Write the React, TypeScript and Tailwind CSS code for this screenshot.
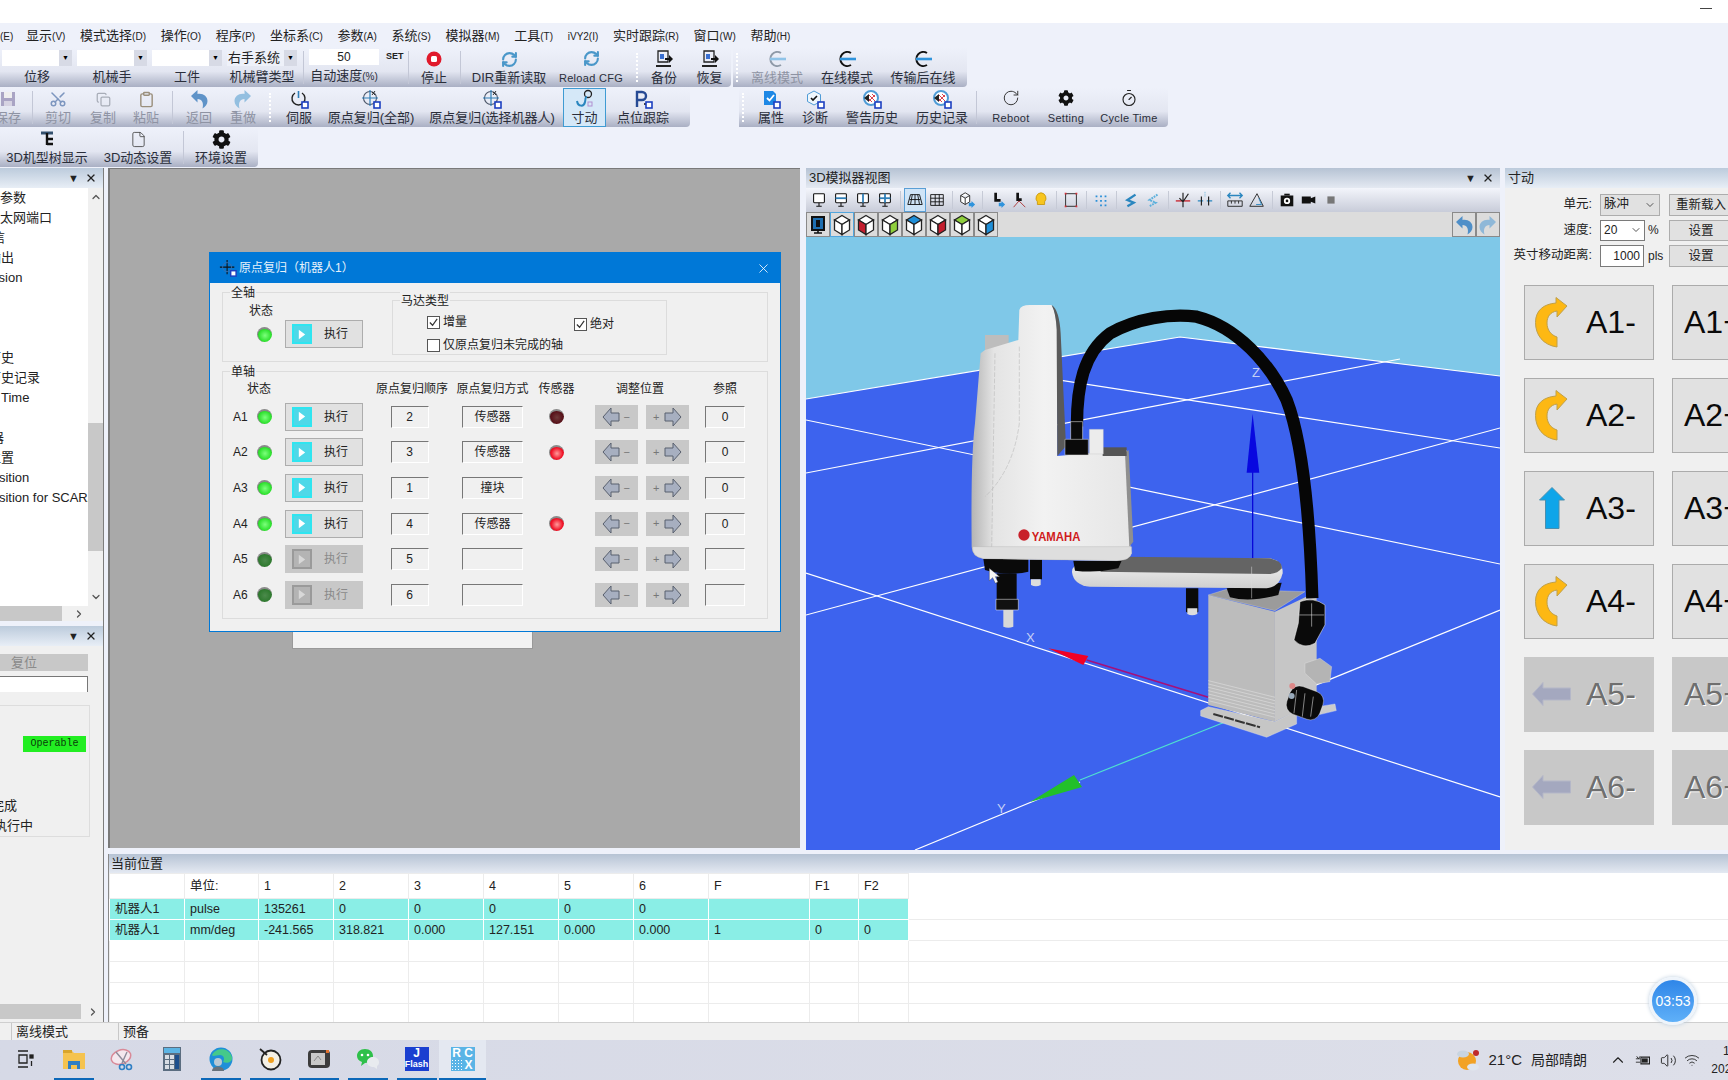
import React from "react";
import clsx from "clsx";
import {
  ChevronDown,
  ChevronRight,
  ChevronUp,
  Clipboard,
  Copy,
  File,
  RefreshCw,
  RotateCw,
  Scissors,
  Timer,
  Volume2,
  Wifi,
  X,
} from "lucide-react";
import { FaCog } from "react-icons/fa";

const MENU: [string, string][] = [
  ["", "(E)"],
  ["显示", "(V)"],
  ["模式选择", "(D)"],
  ["操作", "(O)"],
  ["程序", "(P)"],
  ["坐标系", "(C)"],
  ["参数", "(A)"],
  ["系统", "(S)"],
  ["模拟器", "(M)"],
  ["工具", "(T)"],
  ["", "iVY2(I)"],
  ["实时跟踪", "(R)"],
  ["窗口", "(W)"],
  ["帮助", "(H)"],
];

const Badge = () => <rect x="13" y="13" width="6" height="6" fill="#fff" stroke="#1c3fc0" strokeWidth="1.6" />;

const Svg: React.FC<{ children: React.ReactNode; size?: number; className?: string }> = ({ children, size = 20, className }) => (
  <svg viewBox="0 0 20 20" width={size} height={size} fill="none" className={className}>
    {children}
  </svg>
);

const PlugIcon = ({ dim }: { dim?: boolean }) => (
  <Svg>
    <path d="M14 4A7 7 0 1 0 14 16" stroke={dim ? "#8f9aa8" : "#111"} strokeWidth="2" />
    <path d="M3 10h16" stroke={dim ? "#8fc3e8" : "#2f93dc"} strokeWidth="2.6" />
  </Svg>
);

const HomeIcon = () => (
  <Svg>
    <circle cx="9" cy="9" r="6.500" stroke="#4b5568" strokeWidth="1.100" />
    <path d="M9 1v16M1 9h16" stroke="#2f7fb8" strokeWidth="1.200" />
    <path d="M11 3l3 3M14 2l-3 4" stroke="#333" />
    <Badge />
  </Svg>
);

const HistoryIcon = () => (
  <Svg>
    <circle cx="9" cy="9" r="7" fill="#fff" stroke="#4f9bd6" strokeWidth="2" />
    <path d="M7 6l6 6M13 6l-6 6M10 5l3 3M6 9l4 4" stroke="#d8454f" />
    <path d="M2 9l5-4v8z" fill="#222" />
    <Badge />
  </Svg>
);

const CurveArrow = () => (
  <svg viewBox="0 0 33 51" width="33" height="51">
    <path
      d="M22 50C8 48 .5 38 .5 25.500C.5 13 9 7 21 6V.5L32 9L22 20V14C15 15 12 20 12 26C12 33 16 38 22 40Z"
      fill="#fdb813"
      stroke="#c0a04a"
    />
  </svg>
);

const UpArrow = () => (
  <svg viewBox="0 0 26 42" width="26" height="42" className="ml-[4px]">
    <path d="M13 .5L25.500 13H20V41.500H6.500V13H.5Z" fill="#0ea5e9" stroke="#4a8fae" />
  </svg>
);

const LeftArrow = () => (
  <svg viewBox="0 0 39 24" width="39" height="24" className="ml-[-3px]">
    <path d="M11 .5V6H38.500V18H11V23.500L.5 12Z" fill="#a4a8bf" stroke="#b4b7c8" />
  </svg>
);

const AdjustArrow = ({ flip }: { flip?: boolean }) => (
  <svg viewBox="0 0 18 20" width="18" height="20" className={flip ? "rotate-180" : ""}>
    <path d="M9 1L1 10l8 9v-5h8V6H9Z" fill="#a7afc0" stroke="#59606e" />
  </svg>
);

// head on the left, tail curling down on the right; flip gives redo
const UndoGlyph = ({ flip, color }: { flip?: boolean; color: string }) => (
  <svg viewBox="0 0 20 20" width="20" height="20" className={flip ? "-scale-x-100" : ""}>
    <path d="M2 7L8.500 1V5C14 4 18.500 7.500 18.500 12C18.500 15 16.500 17.500 13.500 19.500C15 14 13 10 8.500 10V13.500Z" fill={color} />
  </svg>
);

// flat toolbar cell: icon on top, caption below
const Tool: React.FC<{ w: string; label: string; dim?: boolean; active?: boolean; sm?: boolean; children?: React.ReactNode }> = ({
  w,
  label,
  dim,
  active,
  sm,
  children,
}) => (
  <div
    className={clsx(
      "flex h-full shrink-0 flex-col items-center justify-center whitespace-nowrap",
      w,
      active && "border border-[#3f9bd3] bg-[#d5e8f8]"
    )}
  >
    <div className="flex h-[20px] items-center justify-center">{children}</div>
    <span className={clsx("leading-[17px]", sm ? "pt-[2px] text-[11px] tracking-[.3px]" : "text-[13px]", dim ? "text-[#8e93a3]" : "text-[#2a2e3a]")}>{label}</span>
  </div>
);

const Sep = ({ w = "w-[4px]" }: { w?: string }) => (
  <div className={clsx("flex shrink-0 justify-center py-[3px]", w)}>
    <div className="w-px bg-[#c3c7d6]" />
  </div>
);

const Grip = ({ w = "w-[6px]" }: { w?: string }) => (
  <div className={clsx("flex shrink-0 justify-center py-[5px]", w)}>
    <div className="border-l-2 border-dotted border-[#fff]" />
  </div>
);

const Combo: React.FC<{ w: string; label: string; text?: string }> = ({ w, label, text }) => (
  <div className={clsx("flex h-full shrink-0 flex-col items-center justify-end pb-[1px]", w)}>
    <div className="mb-[2px] flex h-[16px] w-[70px]">
      <div className={clsx("flex-1 pl-[1px] text-[13px] leading-[16px]", text ? "bg-[#eef1f9]" : "bg-white")}>{text}</div>
      <div className="flex w-[13px] items-center justify-center bg-[#d7dae5] text-[7px] text-black">▼</div>
    </div>
    <span className="text-[13px] leading-[18px] text-[#2a2e3a]">{label}</span>
  </div>
);

const Segment: React.FC<{ className: string; children: React.ReactNode }> = ({ className, children }) => (
  <div className={clsx("flex h-[39px] rounded-br-[4px] bg-gradient-to-b from-[#eef1fa] via-[#e3e6f1] via-60% to-[#aab0c4]", className)}>{children}</div>
);

const Toolbars = () => (
  <div className="flex h-[120px] flex-col gap-px">
    <div className="flex">
      <Segment className="w-[731px]">
        <Combo w="w-[74px]" label="位移" />
        <Combo w="w-[76px]" label="机械手" />
        <Combo w="w-[74px]" label="工件" />
        <Combo w="w-[76px]" label="机械臂类型" text="右手系统" />
        <Sep w="w-[6px]" />
        <div className="flex h-full w-[100px] shrink-0 flex-col justify-end pb-[1px]">
          <div className="mb-[2px] flex h-[16px] items-center">
            <div className="ml-[3px] h-full w-[70px] bg-white text-center text-[12px] leading-[16px]">50</div>
            <span className="ml-[7px] text-[9px] font-bold">SET</span>
          </div>
          <span className="w-[76px] text-center text-[13px] leading-[18px] text-[#2a2e3a]">
            自动速度<span className="text-[10px]">(%)</span>
          </span>
        </div>
        <Sep />
        <Tool w="w-[48px]" label="停止">
          <Svg>
            <circle cx="10" cy="10" r="7.500" fill="#e0192b" />
            <rect x="7" y="7" width="6" height="6" rx="1.500" fill="#fff" />
          </Svg>
        </Tool>
        <Sep />
        <Tool w="w-[94px]" label="DIR重新读取">
          <RefreshCw size={17} color="#4a97c9" strokeWidth={3} />
        </Tool>
        <Tool w="w-[70px]" label="Reload CFG" sm>
          <RefreshCw size={17} color="#4a97c9" strokeWidth={3} />
        </Tool>
        <div className="w-[8px] shrink-0" />
        <Grip />
        <Tool w="w-[48px]" label="备份">
          <Svg>
            <path d="M4 2h10v11H4z" stroke="#222" strokeWidth="1.300" />
            <path d="M2 17h15" stroke="#222" strokeWidth="2" />
            <path d="M6 5h4v5H6z" fill="#3a6fd0" />
            <path d="M11 9h4V6l4 4-4 4v-3h-4z" fill="#111" />
          </Svg>
        </Tool>
        <Tool w="w-[43px]" label="恢复">
          <Svg>
            <path d="M4 2h10v11H4z" stroke="#222" strokeWidth="1.300" />
            <path d="M2 17h15" stroke="#222" strokeWidth="2" />
            <path d="M6 5h4v5H6z" fill="#3a6fd0" />
            <path d="M11 9h4V6l4 4-4 4v-3h-4z" fill="#111" />
          </Svg>
        </Tool>
      </Segment>
      <Segment className="ml-[2px] w-[234px]">
        <Grip w="w-[8px]" />
        <Tool w="w-[72px]" label="离线模式" dim>
          <PlugIcon dim />
        </Tool>
        <Tool w="w-[68px]" label="在线模式">
          <PlugIcon />
        </Tool>
        <Tool w="w-[84px]" label="传输后在线">
          <PlugIcon />
        </Tool>
      </Segment>
    </div>
    <div className="flex">
      <Segment className="ml-[-16px] w-[706px]">
        <Tool w="w-[48px]" label="保存" dim>
          <Svg>
            <path d="M3 3h14v14H3z" fill="#a9a4c4" />
            <path d="M6 3h8v6H6z" fill="#eee" />
            <path d="M6 12h8v5H6z" fill="#d6d3e2" />
          </Svg>
        </Tool>
        <Sep w="w-[1px]" />
        <Tool w="w-[50px]" label="剪切" dim>
          <Scissors size={18} color="#7d96bf" className="-rotate-90" />
        </Tool>
        <Tool w="w-[40px]" label="复制" dim>
          <Copy size={15} color="#a8adb8" />
        </Tool>
        <Tool w="w-[46px]" label="粘贴" dim>
          <Clipboard size={17} color="#9a8f7c" />
        </Tool>
        <Sep w="w-[6px]" />
        <Tool w="w-[48px]" label="返回" dim>
          <UndoGlyph color="#5f93c8" />
        </Tool>
        <Tool w="w-[40px]" label="重做" dim>
          <UndoGlyph color="#93bfe0" flip />
        </Tool>
        <Grip w="w-[14px]" />
        <Tool w="w-[44px]" label="伺服">
          <Svg>
            <path d="M6 4a6.500 6.500 0 1 0 7 0" stroke="#222" strokeWidth="1.400" />
            <path d="M9.500 2v7" stroke="#2f7fb8" strokeWidth="1.600" />
            <Badge />
          </Svg>
        </Tool>
        <Tool w="w-[100px]" label="原点复归(全部)">
          <HomeIcon />
        </Tool>
        <Tool w="w-[142px]" label="原点复归(选择机器人)">
          <HomeIcon />
        </Tool>
        <Tool w="w-[43px]" label="寸动" active>
          <Svg>
            <circle cx="13" cy="5" r="3.500" stroke="#222" strokeWidth="1.300" />
            <path d="M2 12c1 6 7 6 8 1s0-5 2-5" stroke="#2a86bf" strokeWidth="2" />
            <rect x="13" y="13" width="4" height="4" stroke="#b08fd0" />
          </Svg>
        </Tool>
        <Tool w="w-[74px]" label="点位跟踪">
          <Svg>
            <path d="M4 18V3h5a3.500 3.500 0 0 1 0 8H4" stroke="#264a94" strokeWidth="2.400" />
            <circle cx="12" cy="15" r="1" fill="#111" />
            <Badge />
          </Svg>
        </Tool>
      </Segment>
      <Segment className="ml-[49px] w-[429px]">
        <Grip w="w-[8px]" />
        <Tool w="w-[48px]" label="属性">
          <Svg>
            <path d="M3 2h9l3 3v11H3z" fill="#1e88e5" />
            <path d="M6 9l2.500 2.500L13 6" stroke="#fff" strokeWidth="1.800" />
            <Badge />
          </Svg>
        </Tool>
        <Tool w="w-[40px]" label="诊断">
          <Svg>
            <path d="M9 2l6.500 3.500v7L9 16l-6.500-3.500v-7z" fill="#eef6fc" stroke="#4f9bd6" />
            <path d="M6 9l2 2 4-4" stroke="#111" strokeWidth="1.600" />
            <Badge />
          </Svg>
        </Tool>
        <Tool w="w-[74px]" label="警告历史">
          <HistoryIcon />
        </Tool>
        <Tool w="w-[66px]" label="历史记录">
          <HistoryIcon />
        </Tool>
        <Sep w="w-[2px]" />
        <div className="w-[6px] shrink-0" />
        <Tool w="w-[56px]" label="Reboot" sm>
          <RotateCw size={18} color="#333" strokeWidth={1.300} />
        </Tool>
        <Tool w="w-[54px]" label="Setting" sm>
          <FaCog size={16} color="#111" />
        </Tool>
        <Tool w="w-[72px]" label="Cycle Time" sm>
          <Timer size={18} color="#222" strokeWidth={1.500} />
        </Tool>
      </Segment>
    </div>
    <Segment className="w-[258px]">
      <Tool w="w-[94px]" label="3D机型树显示">
        <Svg>
          <path d="M4 4h12" stroke="#33506e" strokeWidth="3" />
          <path d="M10 4v12M10 10h6M10 15h6" stroke="#111" strokeWidth="2.400" />
        </Svg>
      </Tool>
      <Tool w="w-[88px]" label="3D动态设置">
        <File size={17} color="#444" strokeWidth={1.200} />
      </Tool>
      <Sep w="w-[2px]" />
      <Tool w="w-[74px]" label="环境设置">
        <FaCog size={19} color="#111" />
      </Tool>
    </Segment>
  </div>
);

const PanelControls = () => (
  <span className="ml-auto flex items-center gap-[6px] pr-[3px]">
    <span className="text-[11px] leading-none">▼</span>
    <X size={12} strokeWidth={2.500} />
  </span>
);

const PanelHead: React.FC<{ title?: string; controls?: boolean }> = ({ title, controls }) => (
  <div className="flex h-[20px] shrink-0 items-center bg-gradient-to-b from-[#bccbdc] to-[#e8eef6] px-[3px] text-[13px] text-[#222]">
    <span>{title}</span>
    {controls && <PanelControls />}
  </div>
);

const TREE: { text: string; ml: string }[] = [
  { text: "机器人参数", ml: "ml-[-39px]" },
  { text: "以太网端口", ml: "ml-[-13px]" },
  { text: "通信", ml: "ml-[-21px]" },
  { text: "输出", ml: "ml-[-12px]" },
  { text: "Version", ml: "ml-[-21px]" },
  { text: "", ml: "" },
  { text: "", ml: "" },
  { text: "", ml: "" },
  { text: "历史", ml: "ml-[-12px]" },
  { text: "历史记录", ml: "ml-[-12px]" },
  { text: "Time", ml: "ml-[1px]" },
  { text: "", ml: "" },
  { text: "器", ml: "ml-[-9px]" },
  { text: "位置", ml: "ml-[-12px]" },
  { text: "Position", ml: "ml-[-17px]" },
  { text: "Position for SCARA", ml: "ml-[-17px]" },
];

const LeftColumn = () => (
  <div className="flex h-full w-[104px] shrink-0 flex-col border-r border-[#7d7d7d]">
    <PanelHead controls />
    <div className="flex h-[418px] shrink-0 bg-white">
      <div className="w-[88px] overflow-hidden text-[13px] text-[#222]">
        {TREE.map((row, i) => (
          <div key={i} className={clsx("h-[20px] whitespace-nowrap leading-[20px]", row.ml)}>
            {row.text}
          </div>
        ))}
      </div>
      <div className="flex w-[15px] flex-col items-center bg-[#f0f0f0] pt-[3px] text-[#555]">
        <ChevronUp size={12} strokeWidth={2.500} />
        <div className="mt-[220px] h-[128px] w-full bg-[#c8c8c8]" />
        <div className="mt-auto pb-[3px]">
          <ChevronDown size={12} strokeWidth={2.500} />
        </div>
      </div>
    </div>
    <div className="flex h-[15px] shrink-0 items-center bg-[#f0f0f0]">
      <div className="h-full w-[62px] bg-[#c8c8c8]" />
      <ChevronRight size={12} strokeWidth={2.500} className="ml-[11px] text-[#555]" />
    </div>
    <div className="h-[5px] shrink-0" />
    <PanelHead controls />
    <div className="flex flex-1 flex-col bg-[#f0f0f0]">
      <div className="mt-[8px] flex h-[17px] w-[88px] items-center bg-[#c8c8c8] pl-[11px] text-[13px] text-[#8a8a8a]">复位</div>
      <div className="mt-[5px] h-[16px] w-[88px] border-t border-r border-[#777] bg-white" />
      <div className="mt-[13px] h-[132px] w-[90px] border-r border-b border-t border-[#ddd]">
        <div className="ml-[23px] mt-[30px] h-[16px] w-[63px] bg-[#22ee22] text-center font-['Liberation_Mono',monospace] text-[10px] leading-[16px] text-[#0a3a0a]">
          Operable
        </div>
        <div className="ml-[-9px] mt-[44px] whitespace-nowrap text-[13px] leading-[20px] text-[#222]">完成</div>
        <div className="ml-[-6px] whitespace-nowrap text-[13px] leading-[20px] text-[#222]">执行中</div>
      </div>
      <div className="mt-auto mb-[3px] flex h-[15px] items-center">
        <div className="h-full w-[81px] bg-[#c8c8c8]" />
        <ChevronRight size={12} strokeWidth={2.500} className="ml-[6px] text-[#555]" />
      </div>
    </div>
  </div>
);

const Led = ({ tone }: { tone: "green" | "greenOff" | "red" | "redOff" }) => (
  <div
    className={clsx(
      "h-[15px] w-[15px] rounded-full border-t-2 border-l border-[#8a8a8a]",
      tone === "green" && "bg-[radial-gradient(circle,#7dff7d_0%,#2be02b_65%,#1fb01f_100%)]",
      tone === "greenOff" && "bg-[radial-gradient(circle,#4c8a4c_0%,#2f7a2f_65%,#0f5a0f_100%)]",
      tone === "red" && "bg-[radial-gradient(circle,#ff9a9a_0%,#f01428_60%,#c80a1c_100%)]",
      tone === "redOff" && "bg-[radial-gradient(circle,#6e3a3a_0%,#571018_65%,#3a0a0e_100%)]"
    )}
  />
);

const ExecButton = ({ off }: { off?: boolean }) => (
  <div className={clsx("flex h-[28px] w-[78px] items-center border pl-[6px]", off ? "border-[#c8c8c8] bg-[#c8c8c8] text-[#8a8a8a]" : "border-[#adadad] bg-[#e1e1e1] text-[#222]")}>
    <div className={clsx("flex h-[20px] w-[20px] items-center justify-center border-2", off ? "border-[#9a9a9a] bg-[#b4b4b4]" : "border-[#2fe5f0] bg-[#4fd8e8]")}>
      <svg viewBox="0 0 10 12" width="8" height="11">
        <path d="M1 0l8 6-8 6z" fill={off ? "#d8d8d8" : "#fff"} />
      </svg>
    </div>
    <span className="ml-[12px]">执行</span>
  </div>
);

const Sunken: React.FC<{ w: string; children?: React.ReactNode }> = ({ w, children }) => (
  <div className={clsx("flex h-[22px] items-center justify-center border-t border-l border-r border-b border-t-[#777] border-l-[#777] border-r-white border-b-white bg-[#f0f0f0] text-[#222]", w)}>
    {children}
  </div>
);

const Check = ({ on }: { on?: boolean }) => (
  <div className="flex h-[13px] w-[13px] shrink-0 items-center justify-center border border-[#555] bg-white">
    {on && (
      <svg viewBox="0 0 12 12" width="11" height="11">
        <path d="M2 6l3 3 5-7" fill="none" stroke="#333" strokeWidth="1.300" />
      </svg>
    )}
  </div>
);

const AXES: { name: string; order: string; method: string; sensor?: "red" | "redOff"; ref: string; off?: boolean }[] = [
  { name: "A1", order: "2", method: "传感器", sensor: "redOff", ref: "0" },
  { name: "A2", order: "3", method: "传感器", sensor: "red", ref: "0" },
  { name: "A3", order: "1", method: "撞块", ref: "0" },
  { name: "A4", order: "4", method: "传感器", sensor: "red", ref: "0" },
  { name: "A5", order: "5", method: "", ref: "", off: true },
  { name: "A6", order: "6", method: "", ref: "", off: true },
];

const HomeDialog = () => (
  <div className="absolute left-[99px] top-[83px] flex h-[380px] w-[572px] flex-col border border-[#0078d7] bg-[#f0f0f0] text-[12px] text-[#222]">
    <div className="flex h-[30px] shrink-0 items-center bg-[#0078d7] pl-[9px] pr-[9px] text-white">
      <Svg size={18}>
        <path d="M9 1v16M1 9h16" stroke="#111" strokeWidth="1.200" />
        <circle cx="9" cy="9" r="5" stroke="#3b6fb0" />
        <Badge />
      </Svg>
      <span className="ml-[2px] text-[#e6f2fb]">原点复归（机器人1）</span>
      <X size={15} strokeWidth={1.300} className="ml-auto" />
    </div>
    <div className="flex flex-1 flex-col gap-[9px] px-[12px] pt-[9px]">
      <div className="relative h-[70px] border border-[#dcdcdc]">
        <span className="absolute left-[7px] top-[-9px] bg-[#f0f0f0] px-[1px] leading-[18px]">全轴</span>
        <div className="flex h-full pl-[10px]">
          <div className="w-[159px] shrink-0">
            <div className="w-[56px] pt-[9px] text-center leading-[18px]">状态</div>
            <div className="flex items-center">
              <div className="ml-[24px]">
                <Led tone="green" />
              </div>
              <div className="ml-[13px]">
                <ExecButton />
              </div>
            </div>
          </div>
          <div className="relative mt-[7px] h-[55px] w-[275px] border border-[#dcdcdc]">
            <span className="absolute left-[7px] top-[-9px] bg-[#f0f0f0] px-[1px] leading-[18px]">马达类型</span>
            <div className="flex pl-[34px] pt-[15px]">
              <Check on />
              <span className="ml-[3px] w-[131px] leading-[13px]">增量</span>
              <div className="mt-[2px] flex">
                <Check on />
                <span className="ml-[3px] leading-[13px]">绝对</span>
              </div>
            </div>
            <div className="mt-[8px] flex pl-[34px]">
              <Check />
              <span className="ml-[3px] leading-[13px]">仅原点复归未完成的轴</span>
            </div>
          </div>
        </div>
      </div>
      <div className="relative h-[248px] border border-[#dcdcdc] pl-[10px] pt-[7px]">
        <span className="absolute left-[7px] top-[-9px] bg-[#f0f0f0] px-[1px] leading-[18px]">单轴</span>
        <div className="grid grid-cols-[24px_28px_87px_75px_91px_37px_130px_40px] grid-rows-[20px] auto-rows-[35.6px] items-center whitespace-nowrap">
          <div className="col-span-2 pl-[14px]">状态</div>
          <div />
          <div className="ml-[5px] justify-self-center">原点复归顺序</div>
          <div className="justify-self-center">原点复归方式</div>
          <div className="justify-self-center">传感器</div>
          <div className="justify-self-center">调整位置</div>
          <div className="justify-self-center">参照</div>
          {AXES.map((a) => (
            <React.Fragment key={a.name}>
              <div>{a.name}</div>
              <Led tone={a.off ? "greenOff" : "green"} />
              <ExecButton off={a.off} />
              <div className="justify-self-center">
                <Sunken w="w-[38px]">{a.order}</Sunken>
              </div>
              <div className="justify-self-center">
                <Sunken w="w-[61px]">{a.method}</Sunken>
              </div>
              <div className="justify-self-center">{a.sensor && <Led tone={a.sensor} />}</div>
              <div className="flex justify-center gap-[8px] pl-[3px]">
                <div className="flex h-[24px] w-[43px] items-center gap-[4px] bg-[#c8c8c8] pl-[7px] text-[11px] text-[#777]">
                  <AdjustArrow />−
                </div>
                <div className="flex h-[24px] w-[43px] items-center justify-end gap-[4px] bg-[#c8c8c8] pr-[7px] text-[11px] text-[#777]">
                  +<AdjustArrow flip />
                </div>
              </div>
              <Sunken w="w-[40px]">{a.ref}</Sunken>
            </React.Fragment>
          ))}
        </div>
      </div>
    </div>
  </div>
);

const MonitorIcon = ({ h, v }: { h?: boolean; v?: boolean }) => (
  <Svg size={18}>
    <rect x="4" y="3" width="12" height="10" rx="1" stroke="#111" strokeWidth="1.200" fill="#fff" />
    {h && <path d="M4 8h12" stroke="#2f7fb8" strokeWidth="2" />}
    {v && <path d="M10 3v10" stroke="#2f7fb8" strokeWidth="2" />}
    <path d="M10 13v4M7 17h6" stroke="#111" strokeWidth="1.200" />
  </Svg>
);

const ArrowBadge = () => <path d="M12 13h3v-2l4 4-4 4v-2h-3z" fill="#2f93dc" />;

const VIEW_TOOLS: React.ReactNode[] = [
  <MonitorIcon />,
  <MonitorIcon h />,
  <MonitorIcon v />,
  <MonitorIcon h v />,
  "sep",
  <Svg size={18}>
    <path d="M5 4h10l3 11H2zM4 9.500h12M10 4v11M7 4l-2 11M13 4l2 11" stroke="#111" />
  </Svg>,
  <Svg size={18}>
    <path d="M3 4h14v12H3zM3 8h14M3 12h14M8 4v12M12.500 4v12" stroke="#111" />
  </Svg>,
  "sep",
  <Svg size={18}>
    <path d="M8 2l5 3v7l-5 3-5-3V5zM8 8v7M3 5l5 3 5-3" stroke="#222" fill="#fff" />
    <ArrowBadge />
  </Svg>,
  "sep",
  <Svg size={18}>
    <path d="M7 2h3v7h4v3H7z" fill="#111" />
    <ArrowBadge />
  </Svg>,
  <Svg size={18}>
    <path d="M7 2h3v6h3v3H7z" fill="#111" />
    <path d="M10 11l-6 7M10 11l7 7" stroke="#a33" />
  </Svg>,
  <Svg size={18}>
    <path d="M10 2a6 6 0 0 1 4 10v3H6v-3A6 6 0 0 1 10 2z" fill="#f7c51e" stroke="#c99a10" />
  </Svg>,
  "sep",
  <Svg size={18}>
    <path d="M4 3h12v14H4z" stroke="#222" />
    <path d="M3 2h2v2H3zM15 2h2v2h-2zM3 16h2v2H3zM15 16h2v2h-2z" fill="#d7303a" />
  </Svg>,
  "sep",
  <Svg size={18}>
    <path d="M4 5h2v2H4zM9 5h2v2H9zM14 5h2v2h-2zM4 10h2v2H4zM9 10h2v2H9zM14 10h2v2h-2zM9 15h2v2H9zM14 15h2v2h-2z" fill="#2a8fd8" />
  </Svg>,
  "sep",
  <Svg size={18}>
    <path d="M15 4l-9 6 7 3-7 4" stroke="#2a86bf" strokeWidth="2.600" />
  </Svg>,
  <Svg size={18}>
    <path d="M15 4l-9 6 7 3-7 4" stroke="#5cb0dc" strokeWidth="2.200" strokeDasharray="2 1" />
  </Svg>,
  "sep",
  <Svg size={18}>
    <path d="M2 11h16" stroke="#c8303a" strokeWidth="1.600" />
    <path d="M10 2v16M6 8l4 4 6-9" stroke="#222" strokeWidth="1.300" />
  </Svg>,
  <Svg size={18}>
    <path d="M2 11h6M12 11h6" stroke="#2a86bf" strokeWidth="1.600" />
    <path d="M6 6v10M14 6v10" stroke="#222" strokeWidth="1.300" />
    <path d="M10 1v6" stroke="#5cb0dc" strokeDasharray="1 1" />
  </Svg>,
  "sep",
  <Svg size={18}>
    <path d="M2 5h16M5 2L2 5l3 3M15 2l3 3-3 3" stroke="#2a86bf" strokeWidth="1.500" />
    <path d="M2 11h16v6H2zM6 11v3M10 11v3M14 11v3" stroke="#222" />
  </Svg>,
  <Svg size={18}>
    <path d="M2 17L10 3l7 14z" stroke="#222" />
    <path d="M12 8l3 7-6 0" stroke="#2a86bf" />
  </Svg>,
  "sep",
  <Svg size={18}>
    <path d="M3 5h14v12H3z" fill="#111" />
    <path d="M7 3h6v2H7z" fill="#111" />
    <circle cx="10" cy="11" r="3.500" fill="#fff" />
    <circle cx="10" cy="11" r="1.500" fill="#111" />
  </Svg>,
  <Svg size={18}>
    <path d="M2 6h10v8H2zM12 8l5-2v8l-5-2z" fill="#111" />
  </Svg>,
  <Svg size={18}>
    <rect x="6" y="6" width="8" height="8" fill="#777" />
  </Svg>,
];

const CUBES: { top: string; left: string; right: string }[] = [
  { top: "#fff", left: "#fff", right: "#fff" },
  { top: "#fff", left: "#c41e2e", right: "#fff" },
  { top: "#fff", left: "#fff", right: "#8fcf3c" },
  { top: "#1f8fd8", left: "#fff", right: "#fff" },
  { top: "#fff", left: "#fff", right: "#c41e2e" },
  { top: "#8fcf3c", left: "#fff", right: "#fff" },
  { top: "#fff", left: "#fff", right: "#1f8fd8" },
];

const Cube: React.FC<{ top: string; left: string; right: string }> = ({ top, left, right }) => (
  <svg viewBox="0 0 20 22" width="20" height="22">
    <path d="M10 1.500l7.500 4.500-7.500 4.500-7.500-4.500z" fill={top} stroke="#222" strokeWidth="1.300" />
    <path d="M2.500 6l7.500 4.500v10l-7.500-4.500z" fill={left} stroke="#222" strokeWidth="1.300" />
    <path d="M17.500 6l-7.500 4.500v10l7.500-4.500z" fill={right} stroke="#222" strokeWidth="1.300" />
  </svg>
);

const IconBtn: React.FC<{ sel?: boolean; children: React.ReactNode }> = ({ sel, children }) => (
  <div className={clsx("flex h-[25px] w-[24px] items-center justify-center border", sel ? "border-[#52a6dd] bg-[#dcdcdc]" : "border-[#8a8a8a]")}>{children}</div>
);

const Scene = () => (
  <svg viewBox="806 237 694 613" className="block h-full w-full" preserveAspectRatio="none">
    <defs>
      <linearGradient id="bodyGrad" x1="0" x2="1" y1="0" y2="0">
        <stop offset="0" stopColor="#b4b4b4" />
        <stop offset=".14" stopColor="#e4e4e4" />
        <stop offset=".45" stopColor="#f2f2f2" />
        <stop offset="1" stopColor="#e6e6e6" />
      </linearGradient>
      <linearGradient id="armGrad" x1="0" x2="0" y1="0" y2="1">
        <stop offset="0" stopColor="#f4f4f4" />
        <stop offset="1" stopColor="#cfcfcf" />
      </linearGradient>
    </defs>
    <rect x="806" y="237" width="694" height="613" fill="#7fc8e8" />
    <path d="M806 399L1180 337L1500 376V850H806Z" fill="#3d63ee" />
    <g stroke="#fff" strokeWidth="1.200" fill="none">
      <path d="M806 399L1180 337L1500 376" />
      <path d="M987 369L1500 448" />
      <path d="M806 473L1400 359" />
      <path d="M806 420L1500 564" />
      <path d="M806 615L1500 428" />
      <path d="M806 573L1500 797" />
      <path d="M915 850L1080 782" />
      <path d="M1235 718L1500 610" />
    </g>
    <path d="M1080 780L1230 720" stroke="#4fe0d0" strokeWidth="1.200" />
    <path d="M1030 802L1074 775L1082 787Z" fill="#22c02a" />
    <g fill="#c5d0f5" fontSize="13" fontFamily="'Liberation Sans',sans-serif">
      <text x="1026" y="642">X</text>
      <text x="997" y="813">Y</text>
      <text x="1252" y="377">Z</text>
    </g>
    <g transform="translate(950 290) scale(.3333)">
      {/* blue axis */}
      <path d="M908 830V540" stroke="#0808d8" strokeWidth="4" />
      <path d="M908 372L890 548H928Z" fill="#0808e0" />
      {/* red axis */}
      <path d="M775 1222L410 1110" stroke="#a5107a" strokeWidth="5" />
      <path d="M295 1075L415 1098L400 1125Z" fill="#f20024" />
      {/* base box */}
      <path d="M752 1262L775 1250L975 1295L1040 1262V1302L950 1342L752 1278Z" fill="#c6c6c6" stroke="#eee" />
      <path d="M790 1272L930 1312" stroke="#333" strokeWidth="6" strokeDasharray="30 4" />
      <path d="M775 915L975 965V1295L775 1245Z" fill="#bcbcbc" />
      <path d="M975 965L1100 905V1235L975 1295Z" fill="#c6c6c6" />
      <path d="M775 915L830 898L1065 905L975 962Z" fill="#9b9b9b" stroke="#ddd" />
      <path d="M775 1172L975 1222M775 1182L975 1232M775 1192L975 1242M775 1202L975 1252M775 1212L975 1262M775 1222L975 1272M775 1232L975 1282" stroke="#dcdcdc" strokeWidth="2" />
      <path d="M1065 1120L1110 1105L1145 1130L1140 1175L1100 1182L1065 1150Z" fill="#b4b4b4" stroke="#eee" />
      <path d="M1105 1250l50-8l4 20l-50 12Z" fill="#ccc" stroke="#eee" />
      <rect x="1012" y="1195" width="105" height="88" rx="30" transform="rotate(20 1065 1240)" fill="#0a0a0a" stroke="#fff" />
      <path d="M1040 1200l-8 70M1065 1210l-8 70M1090 1220l-8 60" stroke="#fff" strokeWidth="1.500" />
      <circle cx="1027" cy="1188" r="9" fill="#d88" />
      <circle cx="1025" cy="1218" r="9" fill="#9ab" />
      {/* arm */}
      <path d="M830 895L995 878L985 915Q900 938 840 922Z" fill="#0a0a0a" />
      <path d="M708 895H745V965Q726 980 708 965Z" fill="#0a0a0a" />
      <path d="M712 955H742V972Q726 980 712 972Z" fill="#ddd" />
      <path d="M400 815L960 805Q1000 815 998 850Q990 890 950 895L420 890Q370 885 366 845Q366 825 400 815Z" fill="url(#armGrad)" />
      <path d="M450 845L520 800L960 805Q1000 815 995 835Q985 850 960 852Z" fill="#646464" />
      <path d="M905 830V925" stroke="#ddd" strokeWidth="1.500" />
      <path d="M370 812H515L505 835Q440 850 375 842Z" fill="#0a0a0a" />
      {/* tool shafts */}
      <path d="M100 806H235V845Q170 860 105 840Z" fill="#0a0a0a" />
      <path d="M140 850H200V930H140Z" fill="#0a0a0a" />
      <path d="M138 928H205V960H138Z" fill="#111" stroke="#fff" strokeWidth="1.500" />
      <path d="M160 960H190V1010Q175 1016 160 1010Z" fill="#d8d8d8" />
      <path d="M240 808H276V868H240Z" fill="#0a0a0a" />
      <path d="M243 868H272V885Q258 892 243 885Z" fill="#ddd" />
      {/* column */}
      <path d="M105 135H176V178L105 185Z" fill="#bdbdbd" />
      <path d="M92 190L105 180L205 150L208 60Q212 45 240 45L305 45Q320 70 322 130L322 498L530 480Q535 600 540 760L545 790Q540 812 500 812L100 806Q65 800 65 770Q62 500 75 400Z" fill="url(#bodyGrad)" />
      <path d="M305 45Q328 60 332 130L348 468L322 498L320 120Q318 70 305 45Z" fill="#5a5a5a" />
      <path d="M525 488L536 480L550 755L538 770Z" fill="#8f8f8f" />
      <path d="M68 770H545V790Q540 812 500 812L100 806Q65 800 68 770Z" fill="#dedede" stroke="#aaa" />
      <path d="M135 190L125 770M208 170V400Q190 540 105 620" stroke="#b0b0b0" strokeWidth="1.500" strokeDasharray="14 5" fill="none" />
      <path d="M458 472H530V498H458Z" fill="#555" />
      <path d="M418 418H460V492H418Z" fill="#ececec" stroke="#bbb" />
      {/* logo */}
      <circle cx="222" cy="735" r="17" fill="#c8202a" />
      <text x="245" y="752" fill="#d01a20" fontSize="38" fontWeight="700" fontFamily="'Liberation Sans',sans-serif" textLength="146" lengthAdjust="spacingAndGlyphs">
        YAMAHA
      </text>
      {/* cable */}
      <path d="M381 410C380 290 400 190 480 130C560 85 660 70 740 80C860 110 960 220 1010 330C1060 460 1080 700 1087 925" stroke="#060606" strokeWidth="37" fill="none" />
      <path d="M362 395H398V450H362Z" fill="#0a0a0a" stroke="#fff" strokeWidth="1.500" />
      <path d="M345 448H415V495H345Z" fill="#0a0a0a" stroke="#ddd" strokeWidth="1.500" />
      <path d="M1050 935Q1090 920 1125 945V1005L1095 1060Q1060 1080 1032 1050L1045 1000Z" fill="#0a0a0a" stroke="#fff" strokeWidth="1.500" />
      <path d="M1048 975H1122M1085 940V1010" stroke="#fff" strokeWidth="1.500" />
      {/* mouse pointer */}
      <path d="M118 835V872L128 863L136 880L144 876L136 860H149Z" fill="#f4f4f4" stroke="#222" strokeWidth="1" />
    </g>
  </svg>
);

const SimView = () => (
  <div className="flex h-full w-[694px] shrink-0 flex-col">
    <div className="flex h-[20px] shrink-0 items-center bg-gradient-to-b from-[#b6c3d4] to-[#e4e9f2] px-[3px] text-[13px] text-[#222]">
      <span>3D模拟器视图</span>
      <PanelControls />
    </div>
    <div className="flex h-[24px] shrink-0 items-center bg-gradient-to-b from-[#f3f5fb] to-[#c8ccd9] pl-[2px]">
      {VIEW_TOOLS.map((tool, i) =>
        tool === "sep" ? (
          <div key={i} className="mx-[3.5px] h-[18px] w-px bg-[#c6cad6]" />
        ) : (
          <div key={i} className={clsx("flex h-full w-[22px] items-center justify-center", i === 5 && "border border-[#5a9fd6] bg-[#cfe4f7]")}>
            {tool}
          </div>
        )
      )}
    </div>
    <div className="flex h-[25px] shrink-0 items-center bg-[#dcdcdc]">
      <IconBtn>
        <Svg size={20}>
          <path d="M4 2h12v13H4z" fill="#1f6fb0" stroke="#111" strokeWidth="2" />
          <path d="M8 5h4v7H8z" fill="#111" />
          <path d="M10 15v3M6 18h8" stroke="#111" strokeWidth="1.600" />
        </Svg>
      </IconBtn>
      {CUBES.map((c, i) => (
        <IconBtn key={i} sel={i === 0}>
          <Cube {...c} />
        </IconBtn>
      ))}
      <div className="ml-auto flex">
        <IconBtn>
          <UndoGlyph color="#4f8fc8" />
        </IconBtn>
        <IconBtn>
          <UndoGlyph color="#8fb8d8" flip />
        </IconBtn>
      </div>
    </div>
    <div className="min-h-0 flex-1">
      <Scene />
    </div>
  </div>
);

const JOGS: { name: string; icon: "curve" | "up" | "left"; off?: boolean }[] = [
  { name: "A1", icon: "curve" },
  { name: "A2", icon: "curve" },
  { name: "A3", icon: "up" },
  { name: "A4", icon: "curve" },
  { name: "A5", icon: "left", off: true },
  { name: "A6", icon: "left", off: true },
];

const JogButton: React.FC<{ text: string; off?: boolean; icon?: React.ReactNode; pl: string }> = ({ text, off, icon, pl }) => (
  <div
    className={clsx(
      "flex h-[75px] items-center overflow-hidden whitespace-nowrap border text-[32px]",
      pl,
      off ? "border-[#c8c8c8] bg-[#c8c8c8] text-[#6f6f6f] [text-shadow:1px_1px_0_#fff]" : "border-[#ababab] bg-[#e1e1e1] text-[#0a0a0a]"
    )}
  >
    <div className={icon ? "w-[51px] shrink-0" : "hidden"}>{icon}</div>
    <span>{text}</span>
  </div>
);

const JogPanel = () => (
  <div className="flex h-full flex-1 flex-col overflow-hidden">
    <PanelHead title="寸动" />
    <div className="flex-1 bg-[#f0f0f0] pt-[6px]">
      <div className="grid grid-cols-[87px_77px_64px] auto-rows-[21.500px] gap-y-[4px] text-[12.500px] text-[#222]">
        <div className="self-center justify-self-end">单元:</div>
        <div className="ml-[8px] flex w-[60px] items-center justify-between border border-[#adadad] bg-[#e1e1e1] pl-[3px] pr-[3px]">
          脉冲
          <ChevronDown size={12} color="#555" />
        </div>
        <div className="border border-[#adadad] bg-[#e1e1e1] text-center leading-[20px]">重新载入</div>
        <div className="self-center justify-self-end">速度:</div>
        <div className="ml-[8px] flex items-center">
          <div className="flex h-full w-[45px] items-center justify-between border border-[#7a7a7a] bg-white pl-[3px] pr-[2px] text-[12px]">
            20
            <ChevronDown size={12} color="#555" />
          </div>
          <span className="ml-[3px] text-[12px]">%</span>
        </div>
        <div className="border border-[#adadad] bg-[#e1e1e1] text-center leading-[20px]">设置</div>
        <div className="self-center justify-self-end whitespace-nowrap">英寸移动距离:</div>
        <div className="ml-[8px] flex items-center">
          <div className="h-full w-[44px] border border-[#7a7a7a] bg-white pr-[3px] text-right text-[12px] leading-[20px]">1000</div>
          <span className="ml-[4px] text-[12px]">pls</span>
        </div>
        <div className="border border-[#adadad] bg-[#e1e1e1] text-center leading-[20px]">设置</div>
      </div>
      <div className="ml-[19px] mt-[18px] grid w-[278px] grid-cols-[130px_130px] gap-x-[18px] gap-y-[18px]">
        {JOGS.map((j) => (
          <React.Fragment key={j.name}>
            <JogButton
              text={`${j.name}-`}
              off={j.off}
              pl="pl-[10px]"
              icon={j.icon === "curve" ? <CurveArrow /> : j.icon === "up" ? <UpArrow /> : <LeftArrow />}
            />
            <JogButton text={`${j.name}+`} off={j.off} pl="pl-[11px]" />
          </React.Fragment>
        ))}
      </div>
    </div>
  </div>
);

const POSITION_ROWS = [
  ["机器人1", "pulse", "135261", "0", "0", "0", "0", "0", "", "", ""],
  ["机器人1", "mm/deg", "-241.565", "318.821", "0.000", "127.151", "0.000", "0.000", "1", "0", "0"],
];
const POSITION_HEAD = ["", "单位:", "1", "2", "3", "4", "5", "6", "F", "F1", "F2"];

const PositionPanel = () => (
  <div className="flex h-[168px] flex-col overflow-hidden border-l border-[#8a8a8a] bg-white">
    <div className="flex h-[19px] shrink-0 items-center bg-gradient-to-b from-[#b6c3d4] to-[#e4e9f2] px-[2px] text-[13px] text-[#222]">当前位置</div>
    <table className="w-full table-fixed border-collapse text-[12.500px] text-[#222]">
      <colgroup>
        <col className="w-[75px]" />
        <col className="w-[74px]" />
        <col className="w-[75px]" />
        <col className="w-[75px]" />
        <col className="w-[75px]" />
        <col className="w-[75px]" />
        <col className="w-[75px]" />
        <col className="w-[75px]" />
        <col className="w-[101px]" />
        <col className="w-[49px]" />
        <col className="w-[50px]" />
        <col />
      </colgroup>
      <tbody>
        <tr className="h-[25px]">
          {POSITION_HEAD.map((cell, i) => (
            <td key={i} className="border border-[#ececec] px-[5px]">
              {cell}
            </td>
          ))}
          <td />
        </tr>
        {POSITION_ROWS.map((row, r) => (
          <tr key={r} className="h-[21px]">
            {row.map((cell, i) => (
              <td key={i} className="border border-white bg-[#8aeee6] px-[5px]">
                {cell}
              </td>
            ))}
            <td className="border-b border-[#ececec]" />
          </tr>
        ))}
        {[0, 1, 2, 3].map((r) => (
          <tr key={r} className="h-[21px]">
            {POSITION_HEAD.map((_, i) => (
              <td key={i} className="border border-[#ececec]" />
            ))}
            <td className="border-b border-[#ececec]" />
          </tr>
        ))}
      </tbody>
    </table>
  </div>
);

const TASK_ICONS: { key: string; on?: boolean; node: React.ReactNode }[] = [
  {
    key: "view",
    node: (
      <svg viewBox="0 0 20 20" width="20" height="20" fill="none" stroke="#222" strokeWidth="1.300">
        <path d="M3 2h10M3 18h10M4 6h8v8H4z" />
        <rect x="15" y="6" width="3" height="3" fill="#222" />
        <path d="M16.500 12v5" />
      </svg>
    ),
  },
  {
    key: "explorer",
    on: true,
    node: (
      <svg viewBox="0 0 24 24" width="24" height="24">
        <path d="M1 4h9l2 2h11v16H1z" fill="#f5c34f" />
        <path d="M1 3h9v3H1z" fill="#d9a52c" />
        <path d="M6 14h12v8h-3v-4H9v4H6z" fill="#2f7fc4" />
      </svg>
    ),
  },
  {
    key: "snip",
    node: (
      <svg viewBox="0 0 26 24" width="26" height="24" fill="none">
        <ellipse cx="11" cy="10" rx="10" ry="7" transform="rotate(-20 11 10)" stroke="#d98a98" strokeWidth="1.500" fill="#f4e8ee" />
        <path d="M6 5l10 12M17 5L12 16" stroke="#8c8c9a" strokeWidth="1.400" />
        <circle cx="12" cy="20" r="2.500" stroke="#2f7fc4" strokeWidth="1.600" />
        <circle cx="19" cy="20" r="2.500" stroke="#2f7fc4" strokeWidth="1.600" />
      </svg>
    ),
  },
  {
    key: "calc",
    node: (
      <svg viewBox="0 0 20 24" width="20" height="24">
        <rect width="18" height="24" x="1" fill="#5b6d80" />
        <rect width="16" height="5" x="2" y="1" fill="#5cb4e4" />
        <path d="M3 8h4v4H3zM8 8h4v4H8zM3 13h4v4H3zM8 13h4v4H8zM3 18h4v4H3zM8 18h4v4H8z" fill="#d8dde4" />
        <path d="M13 8h4v14h-4z" fill="#1d4f8c" />
      </svg>
    ),
  },
  {
    key: "edge",
    on: true,
    node: (
      <svg viewBox="0 0 24 24" width="24" height="24">
        <circle cx="12" cy="12" r="11.500" fill="#1f8fd8" />
        <path d="M3 8C7 0 20 0 23 10c1 5-5 7-9 5 2-3 1-7-3-7-4 0-7 2-8 0z" fill="#45c98a" />
        <circle cx="9" cy="15" r="4" fill="#b8c8d4" />
        <path d="M3 24c0-6 12-6 12 0z" fill="#67727c" />
      </svg>
    ),
  },
  {
    key: "arrow",
    on: true,
    node: (
      <svg viewBox="0 0 24 24" width="24" height="24" fill="none">
        <circle cx="13" cy="13" r="9.500" fill="#f4f0e6" stroke="#222" strokeWidth="1.800" />
        <circle cx="13" cy="13" r="3" fill="#f0a020" />
        <path d="M2 2l7 6" stroke="#222" strokeWidth="1.800" />
      </svg>
    ),
  },
  {
    key: "tv",
    on: true,
    node: (
      <svg viewBox="0 0 24 24" width="24" height="24">
        <rect x="1" y="3" width="22" height="18" rx="4" fill="#3c3c3c" />
        <rect x="4" y="6" width="14" height="12" fill="#c8c8c8" />
        <path d="M7 14l4-5 3 4" stroke="#888" fill="none" />
        <rect x="19" y="3" width="3" height="3" fill="#e0702c" />
      </svg>
    ),
  },
  {
    key: "wechat",
    on: true,
    node: (
      <svg viewBox="0 0 24 22" width="24" height="22">
        <path d="M9 1c5 0 8 3 8 7s-3 7-8 7l-4 3 1-4C3 13 1 11 1 8c0-4 3-7 8-7z" fill="#2ec04a" />
        <path d="M17 9c3 0 6 2 6 5s-1 3-2 4v3l-3-2c-4 0-7-2-7-5s3-5 6-5z" fill="#e8ebef" />
        <circle cx="6" cy="7" r="1.300" fill="#fff" />
        <circle cx="12" cy="7" r="1.300" fill="#fff" />
      </svg>
    ),
  },
  {
    key: "jflash",
    on: true,
    node: (
      <div className="flex h-[24px] w-[24px] flex-col items-center bg-[#1a3fd0] text-white">
        <span className="text-[12px] font-bold leading-[12px]">J</span>
        <span className="text-[9px] font-bold leading-[11px]">Flash</span>
      </div>
    ),
  },
];

const Taskbar = () => (
  <div className="flex h-[40px] shrink-0 items-stretch bg-gradient-to-r from-[#d6d9e6] to-[#dddfe9]">
    {TASK_ICONS.map((t) => (
      <div key={t.key} className="flex w-[49px] shrink-0 flex-col items-center">
        <div className="flex flex-1 items-center justify-center">{t.node}</div>
        <div className={clsx("h-[2px] w-[40px]", t.on ? "bg-[#0c68b8]" : "bg-transparent")} />
      </div>
    ))}
    <div className="ml-[-2px] flex w-[47px] shrink-0 flex-col items-center bg-[#e4e8f1]">
      <div className="flex flex-1 items-center justify-center">
        <div className="grid h-[24px] w-[24px] grid-cols-2 bg-[#5ab4e6] text-center text-[12px] font-semibold leading-[12px] text-white">
          <span>R</span>
          <span>C</span>
          <span className="bg-[radial-gradient(#fff_1px,transparent_1px)] bg-[length:3px_3px]" />
          <span>X</span>
        </div>
      </div>
      <div className="h-[2px] w-full bg-[#0c68b8]" />
    </div>
    <div className="ml-auto mr-[-40px] flex items-center text-[#222]">
      <svg viewBox="0 0 24 24" width="24" height="24" className="mr-[8px]">
        <circle cx="11" cy="13" r="9" fill="#f2a224" />
        <ellipse cx="7" cy="6" rx="6" ry="3.500" fill="#c8d4e0" />
        <ellipse cx="17" cy="19" rx="6" ry="3.500" fill="#dfe6ee" />
        <circle cx="20" cy="5" r="3" fill="#c02a2a" />
      </svg>
      <span className="text-[15px]">21°C</span>
      <span className="ml-[9px] text-[14px]">局部晴朗</span>
      <ChevronUp size={18} strokeWidth={1.500} className="ml-[22px]" />
      <svg viewBox="0 0 20 14" width="17" height="13" className="ml-[8px]">
        <path d="M7 3h10v8H7z" fill="none" stroke="#222" strokeWidth="1.300" />
        <path d="M8 4.500h7v5H8z" fill="#222" />
        <path d="M1 5h5M1 9h5M2 2l2 3M6 2L4 5" stroke="#222" />
      </svg>
      <Volume2 size={17} strokeWidth={1.300} className="ml-[8px]" />
      <Wifi size={16} strokeWidth={1.300} className="ml-[7px]" />
      <div className="ml-[8px] w-[60px] text-center text-[12px] leading-[18px]">
        <div>15:20</div>
        <div>2022/4/12</div>
      </div>
    </div>
  </div>
);

export default function App() {
  return (
    <div className="relative flex h-[1080px] w-[1728px] flex-col overflow-hidden bg-[#eef1fa] [font-family:'Liberation_Sans','Noto_Sans_CJK_SC',sans-serif] text-[#222]">
      <div className="flex h-[23px] shrink-0 items-center justify-end bg-white pr-[16px]">
        <div className="mb-[6px] h-px w-[12px] bg-[#444]" />
      </div>
      <div className="flex h-[25px] shrink-0 items-center gap-[14.700px] text-[13px] text-[#222]">
        {MENU.map(([zh, key]) => (
          <span key={key} className="whitespace-nowrap first:mr-[-2px]">
            {zh}
            <span className="text-[10px]">{key}</span>
          </span>
        ))}
      </div>
      <Toolbars />
      <div className="flex h-[854px] shrink-0 pt-0">
        <LeftColumn />
        <div className="ml-[4px] flex w-[1620px] shrink-0 flex-col">
          <div className="flex h-[682px] shrink-0">
            <div className="relative h-[680px] w-[692px] shrink-0 border-t border-l-2 border-[#7a7a7a] bg-[#a9a9a9]">
              <div className="absolute left-[182px] top-[452px] h-[28px] w-[241px] border border-[#999] bg-[#f2f2f2]" />
              <HomeDialog />
            </div>
            <div className="w-[6px] shrink-0" />
            <SimView />
            <div className="w-[5px] shrink-0" />
            <JogPanel />
          </div>
          <div className="h-[4px] shrink-0" />
          <PositionPanel />
        </div>
      </div>
      <div className="flex h-[18px] shrink-0 items-center border-t border-[#cfcfcf] bg-[#f0f0f0] text-[13px] text-[#222]">
        <div className="ml-[11px] w-[107px] border-l border-[#c8c8c8] pl-[4px] leading-[17px]">离线模式</div>
        <div className="border-l border-[#c8c8c8] pl-[4px] leading-[17px]">预备</div>
      </div>
      <Taskbar />
      {/* recording timer floating over the table */}
      <div className="absolute left-[1649px] top-[977px] flex h-[48px] w-[48px] items-center justify-center rounded-full border-[3px] border-[#eef4fb] bg-gradient-to-b from-[#2f86e8] to-[#5fb0f8] text-[14px] text-white shadow-[0_0_4px_#bcd]">
        03:53
      </div>
    </div>
  );
}
